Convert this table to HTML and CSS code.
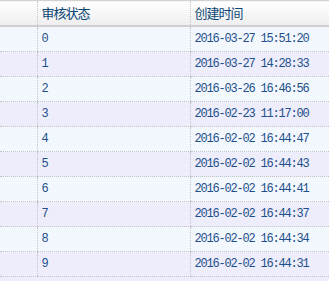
FILE: index.html
```html
<!DOCTYPE html>
<html>
<head>
<meta charset="utf-8">
<link rel="stylesheet" href="styles.css">
</head>
<body>
<table class="grid">
  <colgroup>
    <col class="c-chk">
    <col class="c-status">
    <col class="c-time">
  </colgroup>
  <thead>
    <tr class="head">
      <th></th>
      <th>审核状态</th>
      <th>创建时间</th>
    </tr>
  </thead>
  <tbody>
    <tr class="even"><td></td><td>0</td><td>2016-03-27 15:51:20</td></tr>
    <tr class="odd"><td></td><td>1</td><td>2016-03-27 14:28:33</td></tr>
    <tr class="even"><td></td><td>2</td><td>2016-03-26 16:46:56</td></tr>
    <tr class="odd"><td></td><td>3</td><td>2016-02-23 11:17:00</td></tr>
    <tr class="even"><td></td><td>4</td><td>2016-02-02 16:44:47</td></tr>
    <tr class="odd"><td></td><td>5</td><td>2016-02-02 16:44:43</td></tr>
    <tr class="even"><td></td><td>6</td><td>2016-02-02 16:44:41</td></tr>
    <tr class="odd"><td></td><td>7</td><td>2016-02-02 16:44:37</td></tr>
    <tr class="even"><td></td><td>8</td><td>2016-02-02 16:44:34</td></tr>
    <tr class="odd"><td></td><td>9</td><td>2016-02-02 16:44:31</td></tr>
  </tbody>
</table>
</body>
</html>
```
FILE: styles.css
```css
html, body {
  margin: 0;
  padding: 0;
  background: #eeedfb;
}
.grid {
  border-collapse: collapse;
  table-layout: fixed;
  width: 100%;
}
.c-chk { width: 37px; }
.c-status { width: 153px; }
.head th {
  height: 24px;
  padding: 0 0 0 4px;
  text-align: left;
  font-family: "Noto Sans CJK SC", sans-serif;
  font-weight: normal;
  font-size: 13px;
  letter-spacing: -1px;
  color: #0c4676;
  background: linear-gradient(#ffffff, #eeeeee);
  border-top: 1px solid #d2d2d2;
  border-bottom: 2px solid #cfcfcf;
  border-left: 1px dotted #c4c4c4;
  line-height: 24px;
}
.head th:first-child { border-left: none; }
tbody td {
  height: 24px;
  padding: 0 0 0 4px;
  font-family: "Liberation Mono", monospace;
  font-size: 12px;
  letter-spacing: -1.2px;
  color: #1d4f8c;
  border-bottom: 1px dotted #c4c4c4;
  border-left: 1px dotted #c4c4c4;
  line-height: 24px;
  white-space: nowrap;
}
tbody td:first-child { border-left: none; }
.even td { background: #f3f8fe; }
.odd td { background: #eeedfb; }
```
